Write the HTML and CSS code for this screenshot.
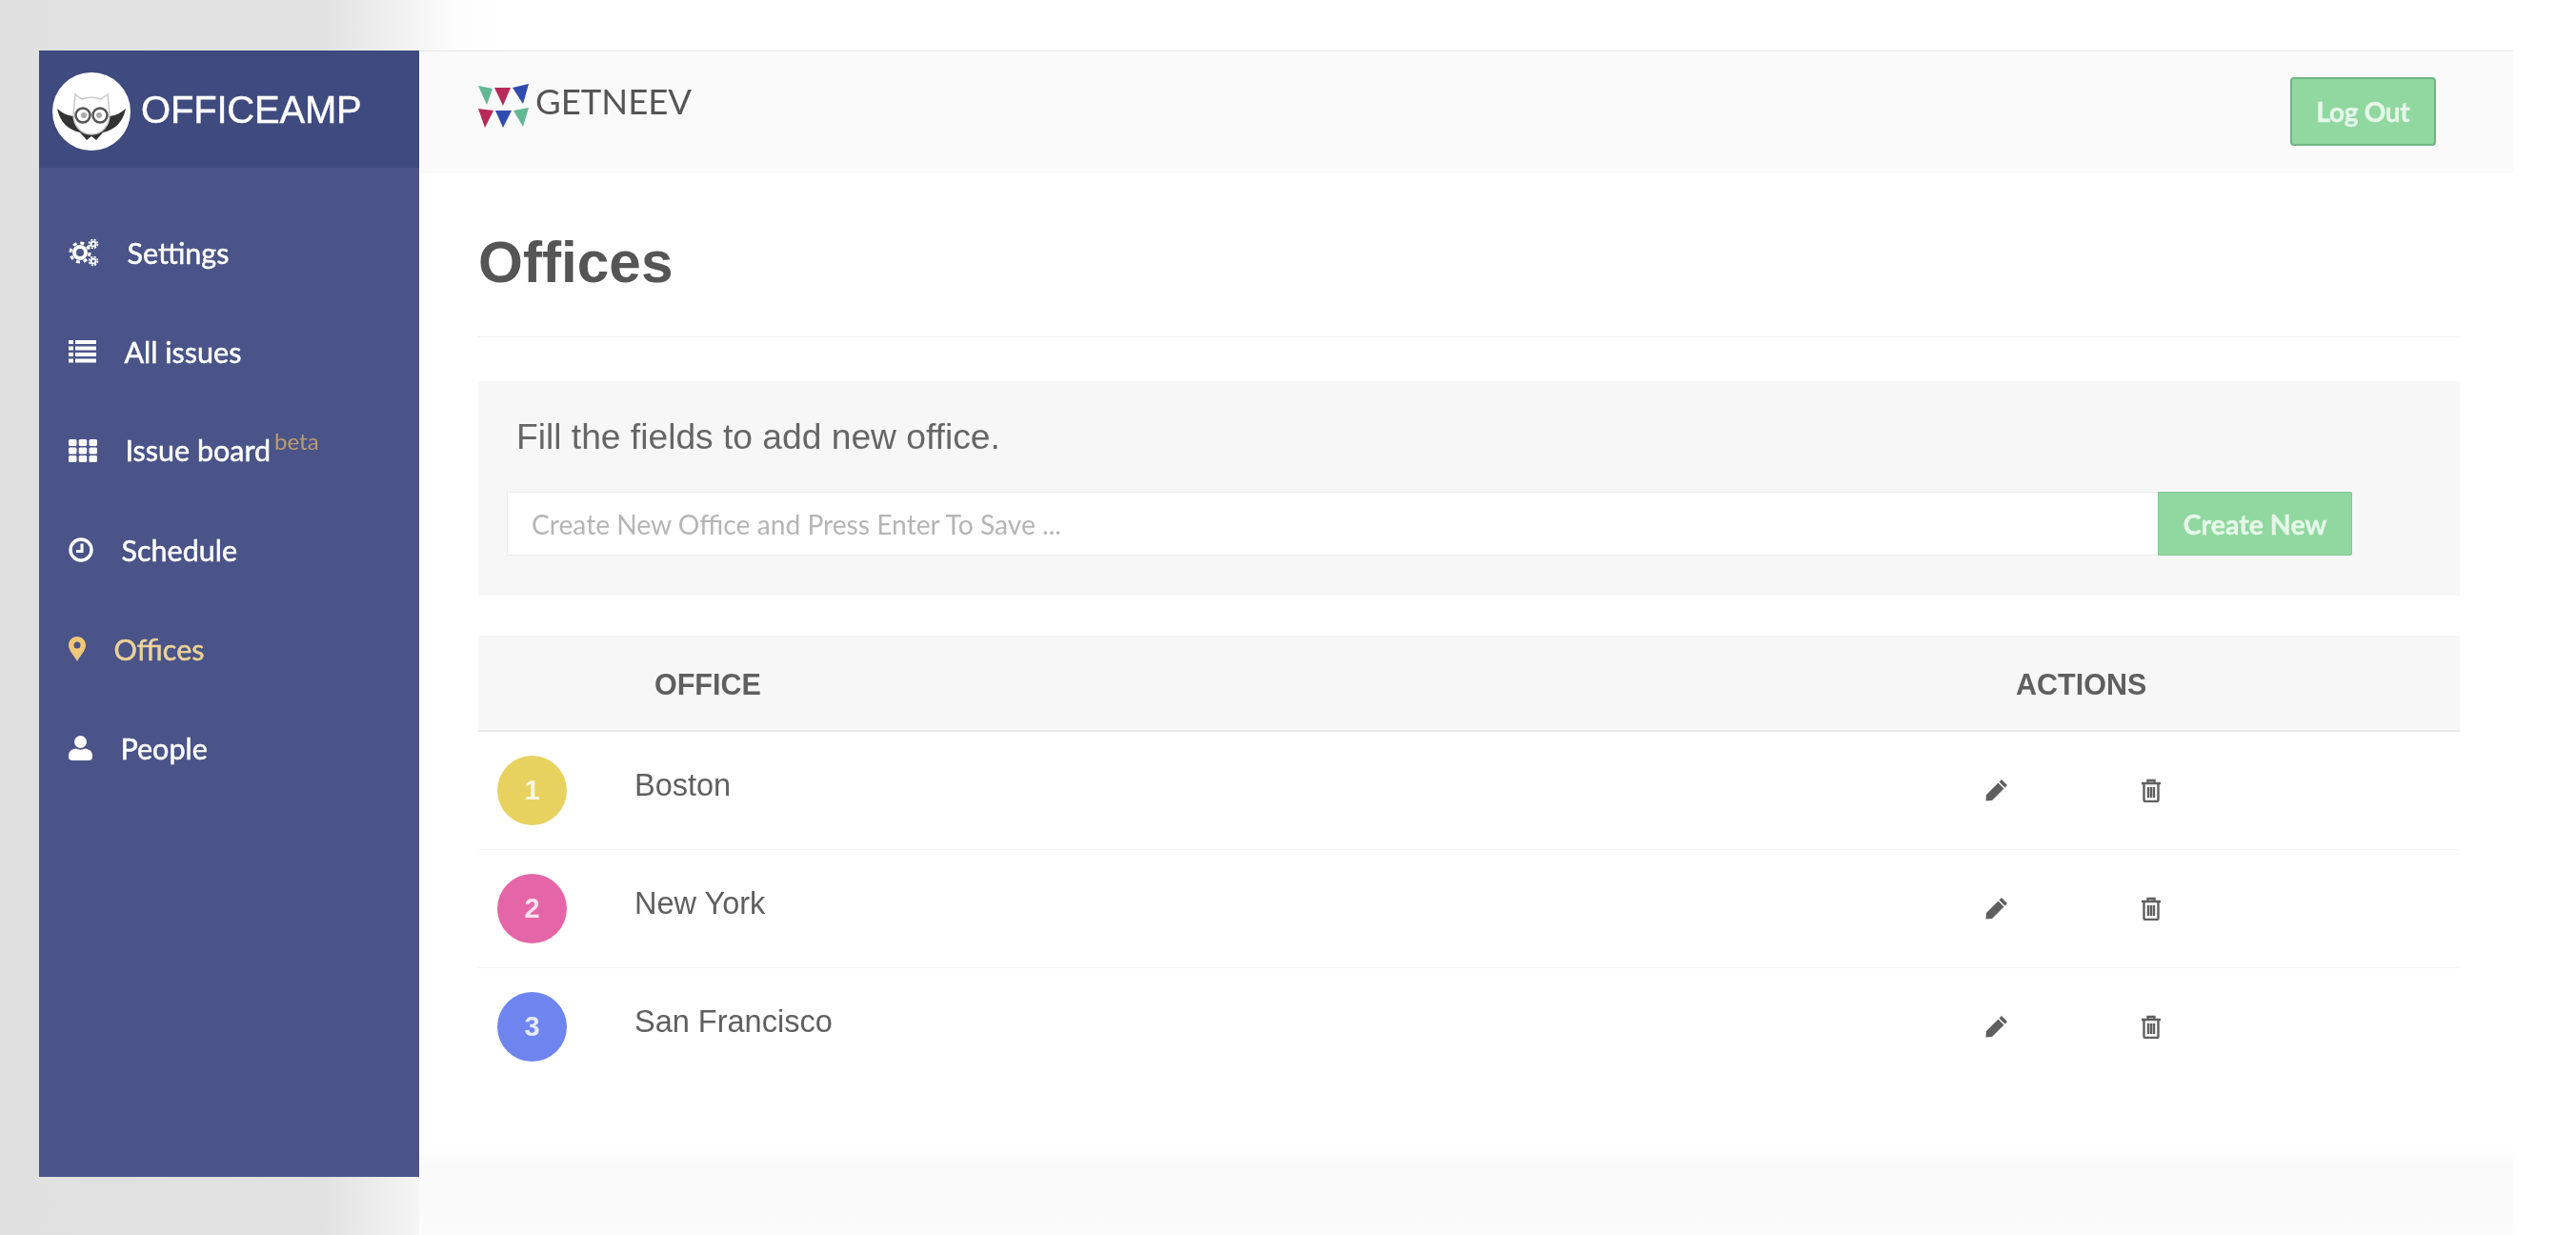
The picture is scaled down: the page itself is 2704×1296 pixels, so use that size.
FILE: index.html
```html
<!DOCTYPE html>
<html lang="en">
<head>
    <meta charset="UTF-8">
    <title>OfficeAmp - Offices</title>
    <link rel="stylesheet" href="styles.css">
</head>
<body>
    <div class="sidebar">
        <div class="brand">
            <svg class="owl" width="82" height="82" viewBox="0 0 82 82">
                <circle cx="41" cy="41" r="41" fill="#fff"/>
                <path d="M5 38 C12 44 18 46 24 46 L58 46 C64 46 70 44 77 38 C74 52 66 60 53 63 L46 71 L41 67 L36 71 L29 63 C16 60 8 52 5 38 Z" fill="#333"/>
                <path d="M24 23 L31 28 C37 26 45 26 51 28 L58 23 L60 44 C60 56 52 65 41 65 C30 65 22 56 22 44 Z" fill="#fff" stroke="#c9c9c9" stroke-width="1.5"/>
                <circle cx="32" cy="45" r="7.500" fill="#fff" stroke="#555" stroke-width="2.500"/>
                <circle cx="50" cy="45" r="7.500" fill="#fff" stroke="#555" stroke-width="2.500"/>
                <circle cx="33" cy="45" r="3" fill="#aaa"/>
                <circle cx="49" cy="45" r="3" fill="#aaa"/>
            </svg>
            <span class="brand-name">OFFICEAMP</span>
        </div>
        <ul class="nav">
            <li class="nav-item">
                <svg class="nav-icon" width="32" height="30" viewBox="0 0 32 30" fill="none" stroke="#fff">
                    <circle cx="12" cy="15" r="6" stroke-width="4"/>
                    <circle cx="12" cy="15" r="10" stroke-width="3" stroke-dasharray="4 3.850"/>
                    <circle cx="26" cy="6" r="2.500" stroke-width="2"/>
                    <circle cx="26" cy="6" r="4.500" stroke-width="1.600" stroke-dasharray="2.200 1.340"/>
                    <circle cx="26" cy="24" r="2.500" stroke-width="2"/>
                    <circle cx="26" cy="24" r="4.500" stroke-width="1.600" stroke-dasharray="2.200 1.340"/>
                </svg>
                <span>Settings</span>
            </li>
            <li class="nav-item">
                <svg class="nav-icon" width="29" height="24" viewBox="0 0 29 24" fill="#fff">
                    <rect y="0" width="5" height="4"/><rect x="7" y="0" width="22" height="4"/>
                    <rect y="6.500" width="5" height="4"/><rect x="7" y="6.500" width="22" height="4"/>
                    <rect y="13" width="5" height="4"/><rect x="7" y="13" width="22" height="4"/>
                    <rect y="19.500" width="5" height="4"/><rect x="7" y="19.500" width="22" height="4"/>
                </svg>
                <span>All issues</span>
            </li>
            <li class="nav-item nav-item-board">
                <svg class="nav-icon" width="30" height="24" viewBox="0 0 30 24" fill="#fff">
                    <rect width="8.500" height="7" rx="1.500"/><rect x="10.700" width="8.500" height="7" rx="1.500"/><rect x="21.500" width="8.500" height="7" rx="1.500"/>
                    <rect y="8.500" width="8.500" height="7" rx="1.500"/><rect x="10.700" y="8.500" width="8.500" height="7" rx="1.500"/><rect x="21.500" y="8.500" width="8.500" height="7" rx="1.500"/>
                    <rect y="17" width="8.500" height="7" rx="1.500"/><rect x="10.700" y="17" width="8.500" height="7" rx="1.500"/><rect x="21.500" y="17" width="8.500" height="7" rx="1.500"/>
                </svg>
                <span>Issue board<sup class="beta">beta</sup></span>
            </li>
            <li class="nav-item">
                <svg class="nav-icon" width="26" height="26" viewBox="0 0 26 26" fill="none" stroke="#fff">
                    <circle cx="13" cy="13" r="11" stroke-width="3.400"/>
                    <path d="M14 6.500 V14.500 H8" stroke-width="3"/>
                </svg>
                <span>Schedule</span>
            </li>
            <li class="nav-item active">
                <svg class="nav-icon" width="18" height="26" viewBox="0 0 18 26">
                    <path fill-rule="evenodd" fill="#f1c878" d="M9 0 C14 0 18 4 18 9 C18 15 12 20 9 26 C6 20 0 15 0 9 C0 4 4 0 9 0 Z M9 5.500 A3.500 3.500 0 1 0 9 12.500 A3.500 3.500 0 1 0 9 5.500 Z"/>
                </svg>
                <span>Offices</span>
            </li>
            <li class="nav-item">
                <svg class="nav-icon" width="25" height="26" viewBox="0 0 25 26" fill="#fff">
                    <circle cx="12.500" cy="6.500" r="6.500"/>
                    <path d="M0 21 C0 16 4 14 8 13.500 C10 15 15 15 17 13.500 C21 14 25 16 25 21 V23 C25 25 23 26 21 26 H4 C2 26 0 25 0 23 Z"/>
                </svg>
                <span>People</span>
            </li>
        </ul>
    </div>

    <div class="main">
        <div class="topbar">
            <div class="company">
                <svg width="54" height="46" viewBox="0 0 54 46">
                    <polygon points="0,2 15,5 9,22" fill="#63b894"/>
                    <polygon points="17,4 34,4 26,23" fill="#b82a5a"/>
                    <polygon points="36,4 53,0 47,21" fill="#2f4bb0"/>
                    <polygon points="0,26 16,28 7,46" fill="#b82a5a"/>
                    <polygon points="18,28 35,28 26,46" fill="#2f4bb0"/>
                    <polygon points="37,28 53,25 47,45" fill="#63b894"/>
                </svg>
                <span class="company-name">GETNEEV</span>
            </div>
            <button class="btn btn-logout">Log Out</button>
        </div>

        <div class="page">
            <h1 class="page-title">Offices</h1>

            <div class="add-panel">
                <p class="add-hint">Fill the fields to add new office.</p>
                <div class="add-form">
                    <input class="add-input" type="text" placeholder="Create New Office and Press Enter To Save ...">
                    <button class="btn btn-create">Create New</button>
                </div>
            </div>

            <table class="office-table">
                <colgroup>
                    <col class="col-num">
                    <col class="col-office">
                    <col class="col-edit">
                    <col>
                </colgroup>
                <thead>
                    <tr>
                        <th></th>
                        <th class="head-office">OFFICE</th>
                        <th class="head-actions" colspan="2">ACTIONS</th>
                    </tr>
                </thead>
                <tbody>
                    <tr>
                        <td><span class="badge badge-yellow">1</span></td>
                        <td class="office-name">Boston</td>
                        <td><svg class="icon-edit" width="24" height="24" viewBox="0 0 24 24" fill="#5f5f5f"><path d="M17 1 L23 7 L20.500 9.500 L14.500 3.500 Z M13.500 4.500 L19.500 10.500 L7 23 L0.500 23.500 L1 17 Z"/></svg></td>
                        <td><svg class="icon-trash" width="22" height="25" viewBox="0 0 22 25" fill="none" stroke="#5f5f5f" stroke-width="2.400"><path d="M1 5 H21 M7.500 5 V2 H14.500 V5 M3.500 5 V22.500 Q3.500 24 5 24 H17 Q18.500 24 18.500 22.500 V5 M8 9 V20 M11 9 V20 M14 9 V20"/></svg></td>
                    </tr>
                    <tr>
                        <td><span class="badge badge-pink">2</span></td>
                        <td class="office-name">New York</td>
                        <td><svg class="icon-edit" width="24" height="24" viewBox="0 0 24 24" fill="#5f5f5f"><path d="M17 1 L23 7 L20.500 9.500 L14.500 3.500 Z M13.500 4.500 L19.500 10.500 L7 23 L0.500 23.500 L1 17 Z"/></svg></td>
                        <td><svg class="icon-trash" width="22" height="25" viewBox="0 0 22 25" fill="none" stroke="#5f5f5f" stroke-width="2.400"><path d="M1 5 H21 M7.500 5 V2 H14.500 V5 M3.500 5 V22.500 Q3.500 24 5 24 H17 Q18.500 24 18.500 22.500 V5 M8 9 V20 M11 9 V20 M14 9 V20"/></svg></td>
                    </tr>
                    <tr>
                        <td><span class="badge badge-blue">3</span></td>
                        <td class="office-name">San Francisco</td>
                        <td><svg class="icon-edit" width="24" height="24" viewBox="0 0 24 24" fill="#5f5f5f"><path d="M17 1 L23 7 L20.500 9.500 L14.500 3.500 Z M13.500 4.500 L19.500 10.500 L7 23 L0.500 23.500 L1 17 Z"/></svg></td>
                        <td><svg class="icon-trash" width="22" height="25" viewBox="0 0 22 25" fill="none" stroke="#5f5f5f" stroke-width="2.400"><path d="M1 5 H21 M7.500 5 V2 H14.500 V5 M3.500 5 V22.500 Q3.500 24 5 24 H17 Q18.500 24 18.500 22.500 V5 M8 9 V20 M11 9 V20 M14 9 V20"/></svg></td>
                    </tr>
                </tbody>
            </table>
        </div>
    </div>
</body>
</html>
```

FILE: styles.css
```css
html, body {
    height: 100%;
}

body {
    margin: 0;
    height: 1296px;
    box-sizing: border-box;
    overflow: hidden;
    display: flex;
    align-items: flex-start;
    padding: 53px 66px 0 41px;
    font-family: "Liberation Sans", Arial, sans-serif;
    color: #555;
    background: linear-gradient(90deg, #e1e0e0 0, #e3e2e2 340px, #fdfdfd 480px, #ffffff 540px);
}

/* the whole capture is slightly soft */
.sidebar, .main {
    filter: blur(0.6px);
}

/* sidebar */
.sidebar {
    flex: 0 0 399px;
    height: 1182px;
    background: #4a5488;
    color: #fff;
}

.brand {
    height: 123px;
    box-sizing: border-box;
    display: flex;
    align-items: center;
    gap: 11px;
    padding: 4px 0 0 14px;
    background: #3f4a7e;
}

.brand-name {
    font-size: 40px;
    letter-spacing: -0.2px;
    margin-top: -2px;
    -webkit-text-stroke: 0.4px #fff;
}

.nav {
    list-style: none;
    margin: 0;
    padding: 37px 0 0 31px;
    font-family: Lato, sans-serif;
    font-size: 30.5px;
    font-weight: 400;
    -webkit-text-stroke: 0.5px currentColor;
}

.nav-item {
    height: 104px;
    display: flex;
    align-items: center;
    gap: 29.5px;
}

.nav-item.active {
    color: #eed298;
}

.nav-item-board > span {
    margin-bottom: 2px;
}

.beta {
    font-size: 24px;
    font-weight: 400;
    color: #bb9c70;
    margin-left: 4px;
    line-height: 0;
    vertical-align: 12px;
    -webkit-text-stroke: 0;
}

/* main area */
.main {
    flex: 1;
    height: 1243px;
    background: linear-gradient(180deg, #ffffff 0, #ffffff 1152px, #f9f9f9 1172px, #fbfbfb 1243px);
}

.topbar {
    height: 128px;
    display: flex;
    align-items: center;
    justify-content: space-between;
    padding: 0 81px 0 62px;
    background: #fafafa;
    border-top: 1px solid #e6e6e6;
}

.company {
    display: flex;
    align-items: center;
    gap: 6px;
    margin-top: -14px;
}

.company-name {
    font-family: Lato, sans-serif;
    font-size: 36.5px;
    font-weight: 400;
    color: #555;
    margin-bottom: 10px;
}

.btn {
    font-family: Lato, sans-serif;
    font-size: 28px;
    font-weight: 700;
    color: #e6f7e9;
    background: #90d8a0;
    cursor: pointer;
    -webkit-text-stroke: 0.4px currentColor;
}

.btn-logout {
    width: 153px;
    height: 72px;
    border: 2px solid #6fb585;
    border-radius: 4px;
    margin-top: -3px;
    letter-spacing: -0.3px;
}

.page {
    padding: 0 56px 0 62px;
}

.page-title {
    margin: 0;
    padding: 57px 0 42px;
    font-size: 60.3px;
    line-height: 72px;
    font-weight: 700;
    color: #555;
    border-bottom: 1px solid #f0f0f0;
}

.add-panel {
    margin-top: 46px;
    height: 225px;
    box-sizing: border-box;
    padding: 38px 113px 0 30px;
    background: #f7f7f7;
}

.add-hint {
    margin: 0 0 38px 10px;
    font-size: 37.2px;
    line-height: 40px;
    color: #666;
}

.add-form {
    display: flex;
}

.add-input {
    flex: 1;
    height: 67px;
    box-sizing: border-box;
    padding: 0 25px;
    border: 1px solid #ececec;
    border-right: none;
    background: #fff;
    font-family: Lato, sans-serif;
    font-size: 28.2px;
}

.add-input::placeholder {
    color: #b5b5b5;
}

.btn-create {
    width: 204px;
    height: 67px;
    font-size: 28.5px;
    border: 1px solid #7fc795;
    border-radius: 0 2px 2px 0;
}

.office-table {
    width: 100%;
    margin-top: 42px;
    border-collapse: collapse;
    table-layout: fixed;
}

.col-num { width: 164px; }
.col-office { width: 1418px; }
.col-edit { width: 163px; }

.office-table th {
    height: 100px;
    box-sizing: border-box;
    padding: 4px 0 0;
    text-align: left;
    font-size: 30.5px;
    color: #5f5f5f;
    background: #f7f7f7;
    border-bottom: 2px solid #e9e9e9;
}

.office-table th.head-office {
    padding-left: 21px;
}

.office-table th.head-actions {
    padding-left: 32px;
}

.office-table td {
    height: 124px;
    box-sizing: border-box;
    padding: 0;
    border-bottom: 1px solid #f3f3f3;
    vertical-align: middle;
}

.office-table tr:last-child td {
    border-bottom: none;
}

.badge {
    display: flex;
    align-items: center;
    justify-content: center;
    width: 73px;
    height: 73px;
    margin-left: 20px;
    border-radius: 50%;
    font-size: 29px;
    font-weight: 700;
    color: rgba(255, 255, 255, 0.82);
}

.badge-yellow { background: #e8d25f; }
.badge-pink { background: #e566a8; }
.badge-blue { background: #6e85f0; }

.office-table td.office-name {
    font-size: 32.5px;
    color: #5f5f5f;
    padding-bottom: 10px;
}

.icon-edit, .icon-trash {
    display: block;
}
```
